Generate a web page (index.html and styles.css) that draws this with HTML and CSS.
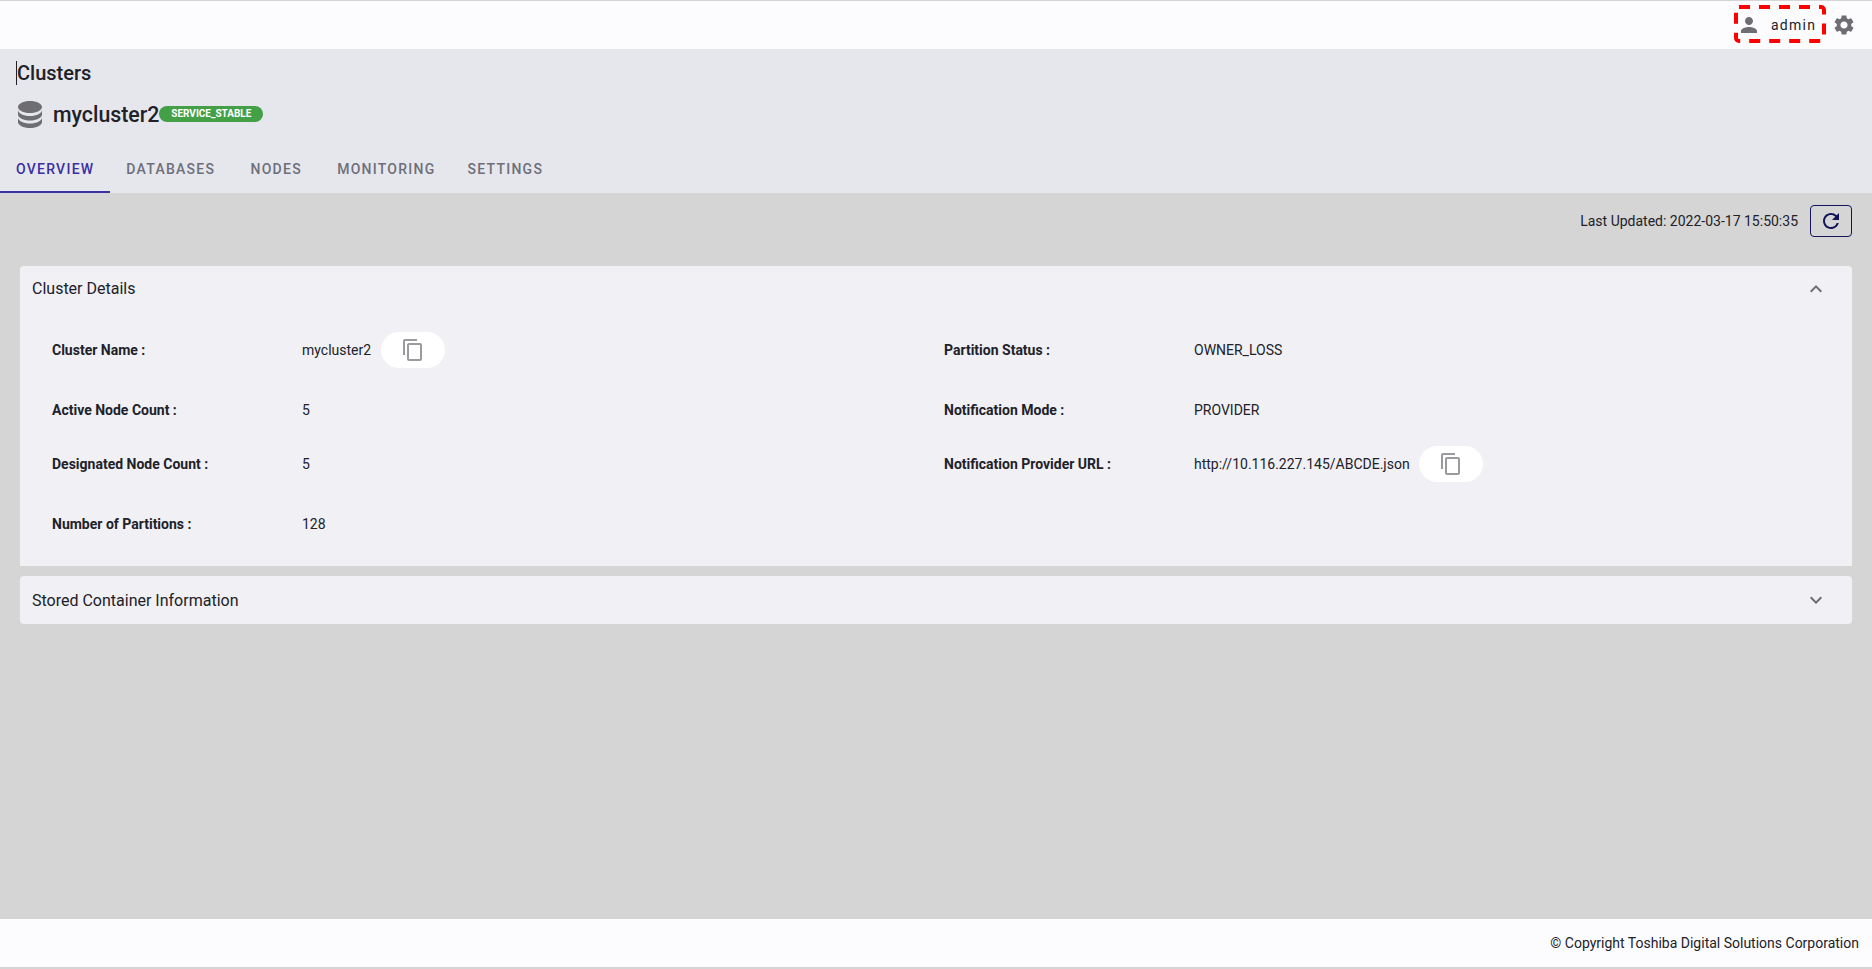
FILE: index.html
```html
<!DOCTYPE html>
<html lang="en">
<head>
<meta charset="utf-8">
<title>Clusters</title>
<link rel="stylesheet" href="styles.css">
</head>
<body>
<div class="page">
  <header class="topbar">
    <div class="user-box">
      <svg class="focus-ring" width="92" height="38" viewBox="0 0 92 38"><rect x="2" y="2" width="88" height="34" rx="3" fill="none" stroke="#f00" stroke-width="4" stroke-dasharray="11 9"/></svg>
      <svg class="icon-user" width="24" height="24" viewBox="0 0 24 24"><path d="M12 12c2.21 0 4-1.79 4-4s-1.79-4-4-4-4 1.79-4 4 1.79 4 4 4zm0 2c-2.67 0-8 1.34-8 4v2h16v-2c0-2.66-5.33-4-8-4z"/></svg>
      <span class="user-name">admin</span>
    </div>
    <svg class="icon-gear" width="24" height="24" viewBox="0 0 24 24"><path d="M19.14 12.94c.04-.3.06-.61.06-.94 0-.32-.02-.64-.07-.94l2.03-1.58c.18-.14.23-.41.12-.61l-1.92-3.32c-.12-.22-.37-.29-.59-.22l-2.39.96c-.5-.38-1.03-.7-1.62-.94l-.36-2.54c-.04-.24-.24-.41-.48-.41h-3.84c-.24 0-.43.17-.47.41l-.36 2.54c-.59.24-1.13.57-1.62.94l-2.39-.96c-.22-.08-.47 0-.59.22L2.74 8.87c-.12.21-.08.47.12.61l2.03 1.58c-.05.3-.09.63-.09.94s.02.64.07.94l-2.03 1.58c-.18.14-.23.41-.12.61l1.92 3.32c.12.22.37.29.59.22l2.39-.96c.5.38 1.03.7 1.62.94l.36 2.54c.05.24.24.41.48.41h3.84c.24 0 .44-.17.47-.41l.36-2.54c.59-.24 1.13-.56 1.62-.94l2.39.96c.22.08.47 0 .59-.22l1.92-3.32c.12-.22.07-.47-.12-.61l-2.01-1.58zM12 15.6c-1.98 0-3.6-1.62-3.6-3.6s1.62-3.6 3.6-3.6 3.6 1.62 3.6 3.6-1.62 3.6-3.6 3.6z"/></svg>
  </header>

  <section class="heading">
    <h1 class="title">Clusters</h1>
    <div class="cluster">
      <svg class="icon-db" width="24" height="27" viewBox="4 3 16 18"><path d="M12 3C7.58 3 4 4.79 4 7s3.58 4 8 4 8-1.79 8-4-3.58-4-8-4M4 9v3c0 2.21 3.58 4 8 4s8-1.79 8-4V9c0 2.21-3.58 4-8 4s-8-1.79-8-4m0 5v3c0 2.21 3.58 4 8 4s8-1.79 8-4v-3c0 2.21-3.58 4-8 4s-8-1.79-8-4Z"/></svg>
      <span class="cluster-name">mycluster2</span>
      <span class="badge">SERVICE_STABLE</span>
    </div>
    <nav class="tabs">
      <a class="tab active">OVERVIEW</a>
      <a class="tab">DATABASES</a>
      <a class="tab">NODES</a>
      <a class="tab">MONITORING</a>
      <a class="tab">SETTINGS</a>
    </nav>
  </section>

  <main class="content">
    <div class="updated">
      <span>Last Updated: 2022-03-17 15:50:35</span>
      <button class="refresh"><svg width="24" height="24" viewBox="0 0 24 24"><path d="M17.65 6.35A7.958 7.958 0 0 0 12 4c-4.42 0-7.99 3.58-7.99 8s3.57 8 7.99 8c3.73 0 6.84-2.55 7.73-6h-2.08A5.99 5.99 0 0 1 12 18c-3.31 0-6-2.69-6-6s2.69-6 6-6c1.66 0 3.14.69 4.22 1.78L13 11h7V4l-2.35 2.35z"/></svg></button>
    </div>

    <div class="card card-open">
      <div class="card-head">
        <span>Cluster Details</span>
        <svg class="chev" width="24" height="24" viewBox="0 0 24 24"><path d="M7.41 15.41 12 10.83l4.59 4.58L18 14l-6-6-6 6z"/></svg>
      </div>
      <div class="details">
        <div class="row row-1">
          <div class="field"><span class="label">Cluster Name :</span><span class="value">mycluster2</span>
            <button class="copy copy-name"><svg width="24" height="24" viewBox="0 0 24 24"><path d="M16 1H4c-1.1 0-2 .9-2 2v14h2V3h12V1zm3 4H8c-1.1 0-2 .9-2 2v14c0 1.1.9 2 2 2h11c1.1 0 2-.9 2-2V7c0-1.1-.9-2-2-2zm0 16H8V7h11v14z"/></svg></button></div>
          <div class="field"><span class="label">Partition Status :</span><span class="value">OWNER_LOSS</span></div>
        </div>
        <div class="row row-2">
          <div class="field"><span class="label">Active Node Count :</span><span class="value">5</span></div>
          <div class="field"><span class="label">Notification Mode :</span><span class="value">PROVIDER</span></div>
        </div>
        <div class="row row-3">
          <div class="field"><span class="label">Designated Node Count :</span><span class="value">5</span></div>
          <div class="field"><span class="label">Notification Provider URL :</span><span class="value">http://10.116.227.145/ABCDE.json</span>
            <button class="copy"><svg width="24" height="24" viewBox="0 0 24 24"><path d="M16 1H4c-1.1 0-2 .9-2 2v14h2V3h12V1zm3 4H8c-1.1 0-2 .9-2 2v14c0 1.1.9 2 2 2h11c1.1 0 2-.9 2-2V7c0-1.1-.9-2-2-2zm0 16H8V7h11v14z"/></svg></button></div>
        </div>
        <div class="row row-4">
          <div class="field"><span class="label">Number of Partitions :</span><span class="value">128</span></div>
        </div>
      </div>
    </div>

    <div class="card card-closed">
      <div class="card-head">
        <span>Stored Container Information</span>
        <svg class="chev" width="24" height="24" viewBox="0 0 24 24"><path d="M7.41 8.59 12 13.17l4.59-4.58L18 10l-6 6-6-6z"/></svg>
      </div>
    </div>
  </main>

  <footer class="footer">© Copyright Toshiba Digital Solutions Corporation</footer>
</div>
</body>
</html>
```
FILE: styles.css
```css
* { box-sizing: border-box; }
html, body { margin: 0; padding: 0; height: 100%; overflow: hidden; }
body { font-family: Roboto, "Liberation Sans", sans-serif; color: #212129; background: #d5d5d5; }
.page { height: 969px; display: flex; flex-direction: column; padding: 1px 0 2px; }

.topbar { height: 48px; flex: none; background: #fcfcff; display: flex; justify-content: flex-end; align-items: center; padding-right: 16px; gap: 6px; }
.user-box { position: relative; width: 92px; height: 38px; display: flex; align-items: center; padding: 2px 0 0 3px; margin-top: -2px; }
.focus-ring { position: absolute; left: 0; top: 0; }
.icon-user { fill: #6e6e72; flex: none; }
.user-name { margin-left: 10px; font-size: 14px; letter-spacing: 1.25px; }
.icon-gear { fill: #6e6e72; flex: none; }

.heading { flex: none; height: 144px; background: #e6e7ec; display: flex; flex-direction: column; }
.title { margin: 12px 0 0 16px; border-left: 1px solid #212129; font-size: 20px; font-weight: 500; line-height: 24px; width: max-content; }
.cluster { display: flex; align-items: center; margin: 15px 0 0 18px; height: 28px; }
.icon-db { fill: #6e6e72; flex: none; }
.cluster-name { margin-left: 11px; font-size: 21.3px; font-weight: 500; }
.badge { height: 16px; width: 104px; border-radius: 8px; background: #43a047; color: #fff; font-size: 10px; font-weight: 700; line-height: 16px; text-align: center; }
.tabs { margin-top: auto; display: flex; height: 47px; }
.tab { display: flex; align-items: center; justify-content: center; min-width: 90px; padding: 0 16px; font-size: 14px; font-weight: 500; letter-spacing: 1.25px; color: #6e6e7a; border-bottom: 2px solid transparent; }
.tab.active { color: #3a2fa3; border-bottom-color: #3a2fa3; }

.content { flex: 1; padding: 0 20px; display: flex; flex-direction: column; }
.updated { display: flex; justify-content: flex-end; align-items: center; gap: 12px; font-size: 14px; margin-top: 12px; height: 32px; }
.refresh { width: 42px; height: 32px; padding: 0; display: flex; align-items: center; justify-content: center; background: transparent; border: 1px solid #14145a; border-radius: 4px; }
.refresh svg { fill: #14145a; }
.card { background: #f0f0f5; }
.card-open { margin-top: 29px; height: 300px; border-radius: 4px 4px 0 0; }
.card-closed { margin-top: 10px; height: 48px; border-radius: 4px; }
.card-head { height: 45px; padding: 0 24px 0 12px; display: flex; justify-content: space-between; align-items: center; font-size: 16px; }
.card-closed .card-head { height: 48px; }
.chev { fill: #6e6e72; }

.details { display: flex; flex-direction: column; padding: 21px 0 0 32px; }
.row { display: grid; grid-template-columns: 892px 1fr; height: 36px; align-items: center; }
.row-2 { margin-top: 24px; }
.row-3 { margin-top: 18px; }
.row-4 { margin-top: 24px; }
.field { display: flex; align-items: center; font-size: 14px; }
.label { width: 250px; flex: none; font-weight: 700; }
.copy { width: 64px; height: 36px; margin-left: 9px; padding: 0; display: flex; align-items: center; justify-content: center; background: #fff; border: 0; border-radius: 18px; }
.copy-name { margin-left: 10px; }
.copy svg { fill: #9b9b9f; }

.footer { flex: none; height: 48px; background: #fcfcff; display: flex; align-items: center; justify-content: flex-end; padding-right: 13px; font-size: 14px; }
```
